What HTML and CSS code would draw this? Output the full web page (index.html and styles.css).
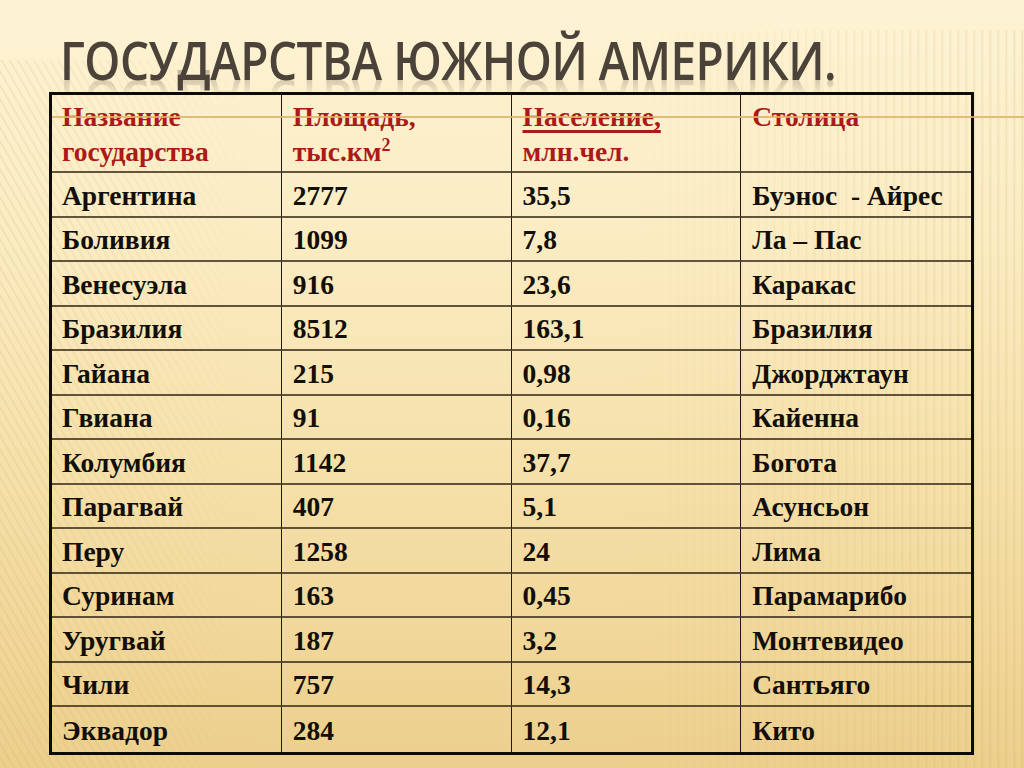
FILE: index.html
```html
<!DOCTYPE html>
<html lang="ru">
<head>
<meta charset="utf-8">
<title>Государства Южной Америки</title>
<link rel="stylesheet" href="styles.css">
</head>
<body>
<div class="slide">
  <div class="stripes-left"></div>
  <div class="stripes-right"></div>
  <h1 class="title">Государства Южной Америки.</h1>
  <div class="rule"></div>
  <table class="grid">
    <tr class="head">
      <td>Название<br>государства</td>
      <td>Площадь,<br>тыс.км<sup>2</sup></td>
      <td><u>Население,</u><br>млн.чел.</td>
      <td>Столица</td>
    </tr>
    <tr><td>Аргентина</td><td>2777</td><td>35,5</td><td>Буэнос&nbsp;&nbsp;- Айрес</td></tr>
    <tr><td>Боливия</td><td>1099</td><td>7,8</td><td>Ла – Пас</td></tr>
    <tr><td>Венесуэла</td><td>916</td><td>23,6</td><td>Каракас</td></tr>
    <tr><td>Бразилия</td><td>8512</td><td>163,1</td><td>Бразилия</td></tr>
    <tr><td>Гайана</td><td>215</td><td>0,98</td><td>Джорджтаун</td></tr>
    <tr><td>Гвиана</td><td>91</td><td>0,16</td><td>Кайенна</td></tr>
    <tr><td>Колумбия</td><td>1142</td><td>37,7</td><td>Богота</td></tr>
    <tr><td>Парагвай</td><td>407</td><td>5,1</td><td>Асунсьон</td></tr>
    <tr><td>Перу</td><td>1258</td><td>24</td><td>Лима</td></tr>
    <tr><td>Суринам</td><td>163</td><td>0,45</td><td>Парамарибо</td></tr>
    <tr><td>Уругвай</td><td>187</td><td>3,2</td><td>Монтевидео</td></tr>
    <tr><td>Чили</td><td>757</td><td>14,3</td><td>Сантьяго</td></tr>
    <tr class="last"><td>Эквадор</td><td>284</td><td>12,1</td><td>Кито</td></tr>
  </table>
</div>
</body>
</html>
```

FILE: styles.css
```css
html, body {
  margin: 0;
  padding: 0;
}

.slide {
  position: relative;
  width: 1024px;
  height: 768px;
  overflow: hidden;
  background: linear-gradient(180deg, #fdf3d4 0%, #fbecc3 30%, #f5dfa7 65%, #eccf8c 100%);
  padding-top: 30px;
  box-sizing: border-box;
}

.stripes-left {
  position: absolute;
  left: 0;
  top: 60px;
  width: 260px;
  height: 708px;
  background: repeating-linear-gradient(60deg, rgba(255,255,255,0) 0px, rgba(255,255,255,0) 4px, rgba(205,170,100,0.22) 5px, rgba(255,255,255,0) 7px);
  -webkit-mask-image: linear-gradient(90deg, #000 0%, rgba(0,0,0,0.5) 50%, transparent 100%);
  mask-image: linear-gradient(90deg, #000 0%, rgba(0,0,0,0.5) 50%, transparent 100%);
}

.stripes-right {
  position: absolute;
  right: 0;
  top: 30px;
  width: 400px;
  height: 738px;
  background: repeating-linear-gradient(90deg, rgba(255,255,255,0) 0px, rgba(255,255,255,0) 5px, rgba(200,165,95,0.22) 6px, rgba(255,255,255,0) 8px);
  -webkit-mask-image: linear-gradient(270deg, #000 0%, rgba(0,0,0,0.6) 40%, transparent 100%);
  mask-image: linear-gradient(270deg, #000 0%, rgba(0,0,0,0.6) 40%, transparent 100%);
}

.title {
  position: relative;
  margin: 0 0 0 60px;
  width: 900px;
  font-family: "Open Sans", "DejaVu Sans", sans-serif;
  font-weight: 600;
  font-size: 53px;
  line-height: 60px;
  letter-spacing: -0.5px;
  text-transform: uppercase;
  color: #4b4339;
  transform: scaleX(0.865);
  transform-origin: left center;
  -webkit-box-reflect: below -20px linear-gradient(transparent 55%, rgba(255,255,255,0.35));
}

.rule {
  position: absolute;
  left: 52px;
  right: 0;
  top: 116px;
  height: 2px;
  background: #dcb468;
  opacity: 0.85;
  z-index: 2;
}

.grid {
  position: relative;
  margin: 2px 0 0 49px;
  width: 925px;
  border: 3px solid #0d0b08;
  border-collapse: separate;
  border-spacing: 0;
  table-layout: fixed;
  font-family: "Liberation Serif", "Times New Roman", serif;
  font-weight: 700;
  font-size: 27.5px;
  color: #120e08;
  z-index: 1;
}

.grid td {
  box-sizing: border-box;
  height: 44.5px;
  padding: 3px 0 0 10px;
  vertical-align: middle;
  border-right: 1px solid #1e1a12;
  border-bottom: 2px solid rgba(70, 58, 36, 0.85);
  line-height: 28px;
  white-space: nowrap;
}

.grid td + td {
  padding-left: 11px;
}

.grid td:last-child {
  border-right: none;
}

.grid tr.last td {
  border-bottom: none;
}

.grid tr.head td {
  height: 78px;
  vertical-align: top;
  padding-top: 4px;
  line-height: 35px;
  color: #ac1a17;
}

.grid sup {
  font-size: 18px;
  line-height: 0;
  vertical-align: 10px;
}

.grid u {
  text-decoration-thickness: 3px;
  text-underline-offset: 4px;
}
```
